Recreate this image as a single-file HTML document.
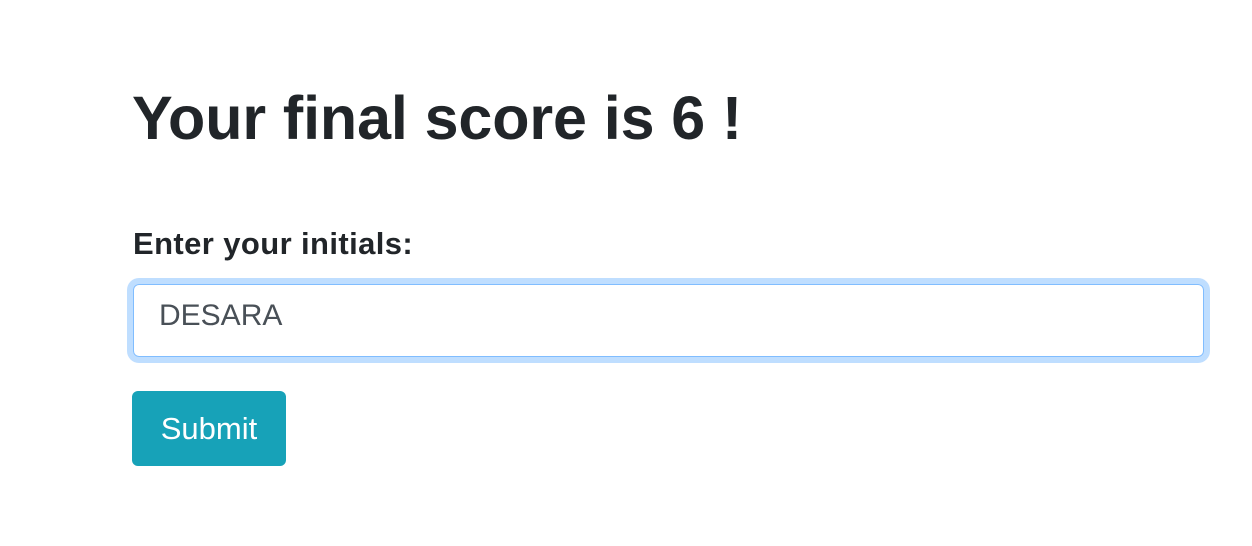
<!DOCTYPE html>
<html><head><style>
body{margin:0;background:#fff;width:1252px;height:546px;overflow:hidden;font-family:"Liberation Sans",sans-serif;color:#212529;position:relative}
h1{position:absolute;left:132px;top:78px;margin:0;font-size:61px;line-height:80px;font-weight:bold;letter-spacing:-0.1px;white-space:nowrap}
.lab{position:absolute;left:133px;top:224px;font-size:31px;line-height:40px;font-weight:bold;letter-spacing:0.4px}
.inp{position:absolute;left:133px;top:284px;width:1069px;height:71px;border:1px solid #80bdff;border-radius:6px;box-shadow:0 0 0 6px rgba(0,123,255,.25);box-sizing:content-box}
.inp span{position:absolute;left:25px;top:11px;font-size:30px;line-height:40px;color:#495057}
.btn{position:absolute;left:132px;top:391px;width:154px;height:75px;background:#17a2b8;border-radius:6px;color:#fff;font-size:31px;line-height:75px;text-align:center}
</style></head><body>
<h1>Your final score is 6 !</h1>
<div class="lab">Enter your initials:</div>
<div class="inp"><span>DESARA</span></div>
<div class="btn">Submit</div>
</body></html>
